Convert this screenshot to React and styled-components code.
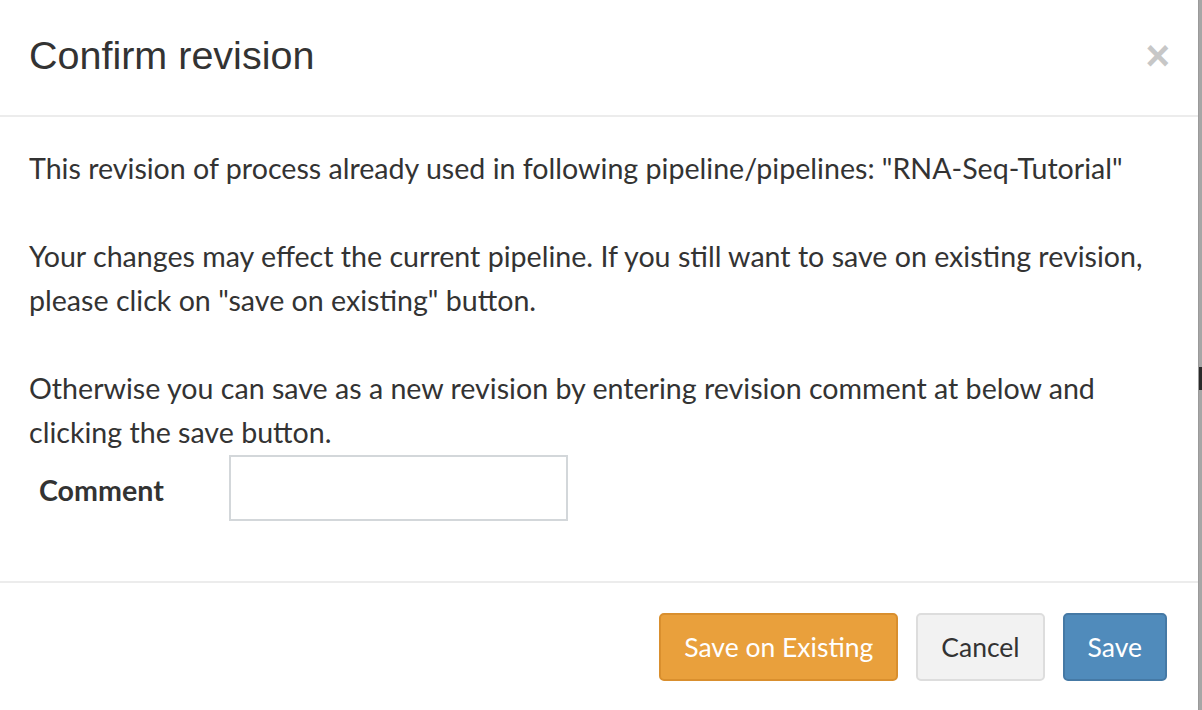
import React from "react";
import styled, { createGlobalStyle } from "styled-components";

const Global = createGlobalStyle`
  html, body { margin: 0; padding: 0; background: #a6a6a6; }
  body { width: 1202px; height: 710px; overflow: hidden; }
  * { box-sizing: border-box; }
`;

const Page = styled.div`
  display: flex;
  width: 1202px;
  height: 710px;
  overflow: hidden;
`;

const Modal = styled.div`
  width: 1198px;
  flex: none;
  background: #fff;
  color: #333;
  display: flex;
  flex-direction: column;
`;

const Backdrop = styled.div`
  flex: 1;
  background: #a6a6a6;
  border-left: 1px solid #9a9a9a;
  padding-top: 367px;
`;

const HiddenGlyph = styled.div`
  width: 4px;
  height: 23px;
  background: #2a2a2a;
`;

const Header = styled.div`
  display: flex;
  justify-content: space-between;
  align-items: flex-start;
  padding: 28px 30px 32px 29px;
  border-bottom: 2px solid #ececec;
`;

const Title = styled.h4`
  margin: 0;
  font-family: "Liberation Sans", Arial, sans-serif;
  font-weight: 400;
  font-size: 39.5px;
  line-height: 54px;
  color: #333;
`;

const Close = styled.button`
  border: 0;
  background: none;
  padding: 0;
  margin: 1px -2px 0 0;
  font-family: "Liberation Sans", Arial, sans-serif;
  font-weight: 700;
  font-size: 42px;
  line-height: 54px;
  color: #c7c7c7;
  cursor: pointer;
`;

const Body = styled.div`
  padding: 29px 30px 30px 29px;
  font-family: Lato, "Open Sans", sans-serif;
  font-size: 28.6px;
  line-height: 44px;
  color: #333;
`;

const Para = styled.p`
  margin: 0 0 44px;
  &:last-of-type { margin-bottom: 0; }
`;

const FormRow = styled.div`
  display: flex;
  align-items: center;
  margin: 1px 0 30px;
`;

const Label = styled.label`
  width: 200px;
  padding-left: 10px;
  font-weight: 700;
  padding-top: 4px;
`;

const Input = styled.input`
  width: 339px;
  height: 66px;
  border: 2px solid #d3d7da;
  border-radius: 0;
  outline: none;
  font: inherit;
  padding: 0 12px;
`;

const Footer = styled.div`
  display: flex;
  justify-content: flex-end;
  gap: 18px;
  padding: 30px 31px 30px 30px;
  border-top: 2px solid #ececec;
`;

const variants = {
  warning: { bg: "#e9a03c", border: "#d98f2e", color: "#fff" },
  default: { bg: "#f2f2f2", border: "#dddddd", color: "#333" },
  primary: { bg: "#508bbb", border: "#4579a5", color: "#fff" },
};

const Button = styled.button`
  height: 68px;
  padding: 0 23px;
  border-radius: 5px;
  border: 2px solid ${(p) => variants[p.$v].border};
  background: ${(p) => variants[p.$v].bg};
  color: ${(p) => variants[p.$v].color};
  font-family: Lato, "Open Sans", sans-serif;
  font-size: 26.5px;
  cursor: pointer;
`;

export default function App() {
  return (
    <>
      <Global />
      <Page>
        <Modal>
          <Header>
            <Title>Confirm revision</Title>
            <Close aria-label="Close">×</Close>
          </Header>
          <Body>
            <Para>
              This revision of process already used in following pipeline/pipelines: "RNA-Seq-Tutorial"
            </Para>
            <Para>
              Your changes may effect the current pipeline. If you still want to save on existing revision,
              <br />
              please click on "save on existing" button.
            </Para>
            <Para>
              Otherwise you can save as a new revision by entering revision comment at below and
              <br />
              clicking the save button.
            </Para>
            <FormRow>
              <Label>Comment</Label>
              <Input type="text" />
            </FormRow>
          </Body>
          <Footer>
            <Button $v="warning">Save on Existing</Button>
            <Button $v="default">Cancel</Button>
            <Button $v="primary">Save</Button>
          </Footer>
        </Modal>
        <Backdrop>
          <HiddenGlyph />
        </Backdrop>
      </Page>
    </>
  );
}
